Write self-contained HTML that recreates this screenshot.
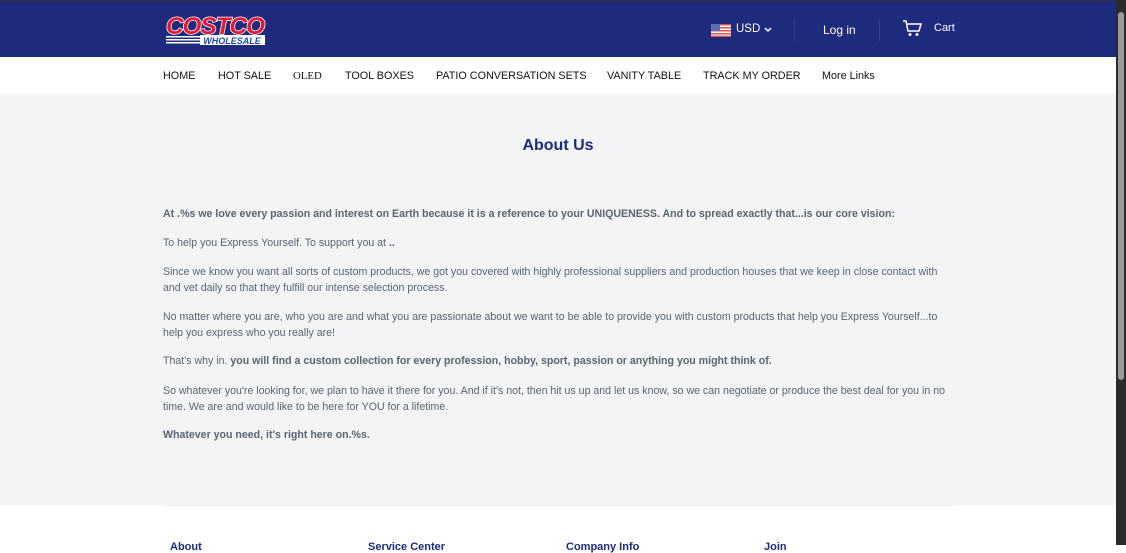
<!DOCTYPE html>
<html><head><meta charset="utf-8"><style>
*{margin:0;padding:0;box-sizing:border-box}
body{width:1126px;height:545px;overflow:hidden;font-family:"Liberation Sans",Arial,sans-serif;background:#fff;position:relative}
.hdr{position:absolute;left:0;top:0;width:1116px;height:57px;background:#1e2a7c;border-top:1px solid #333}
.nav{position:absolute;left:0;top:57px;width:1116px;height:37px;background:#fff}
.nav span{position:absolute;top:13px;font-size:10.8px;color:#111}
.main{position:absolute;left:0;top:94px;width:1116px;height:411px;background:#f3f4f6}
.sb{position:absolute;right:0;top:0;width:10px;height:545px;background:#2b2b2b}
.sb div{position:absolute;left:2px;top:12px;width:6px;height:368px;background:#9a9a9a;border-radius:3px}
h1{position:absolute;top:137px;left:0;width:1116px;text-align:center;font-size:16px;color:#1e2a7c;font-weight:bold}
.p{position:absolute;left:163px;width:790px;font-size:10.6px;color:#5b6470;line-height:15.5px}
.fh{position:absolute;top:541px;font-size:11px;color:#1e2a7c;font-weight:bold}
</style></head><body>
<div class="hdr">
 <svg style="position:absolute;left:164px;top:12px" width="103" height="33" viewBox="0 0 103 33">
  <text x="51" y="21" text-anchor="middle" font-family="Liberation Sans" font-weight="bold" font-style="italic" font-size="24" fill="#e31837" stroke="#fff" stroke-width="1.5" paint-order="stroke" letter-spacing="-1" textLength="98" lengthAdjust="spacingAndGlyphs">COSTCO</text>
  <rect x="2" y="23" width="38" height="1.5" fill="#fff"/><rect x="2" y="26" width="38" height="1.5" fill="#fff"/><rect x="2" y="29" width="38" height="1.5" fill="#fff"/>
  <rect x="36" y="22" width="65" height="10" fill="#fff"/>
  <text x="68" y="31" text-anchor="middle" font-family="Liberation Sans" font-weight="bold" font-style="italic" font-size="9" fill="#1e4aa8">WHOLESALE</text>
 </svg>
 <svg style="position:absolute;left:711px;top:23px" width="20" height="13"><rect width="20" height="13" fill="#fff"/><g fill="#d9534f"><rect y="0" width="20" height="1.5"/><rect y="3" width="20" height="1.5"/><rect y="6" width="20" height="1.5"/><rect y="9" width="20" height="1.5"/><rect y="11.5" width="20" height="1.5"/></g><rect width="9" height="7" fill="#5a6fb8"/></svg>
 <span style="position:absolute;left:736px;top:22px;color:#fff;font-size:11.5px">USD</span>
 <svg style="position:absolute;left:764px;top:26px" width="8" height="6"><path d="M1 1l3 3 3-3" stroke="#fff" stroke-width="1.5" fill="none"/></svg>
 <div style="position:absolute;left:794px;top:18px;width:1px;height:22px;background:#34418a"></div>
 <span style="position:absolute;left:823px;top:22px;color:#fff;font-size:12px">Log in</span>
 <div style="position:absolute;left:879px;top:18px;width:1px;height:22px;background:#34418a"></div>
 <svg style="position:absolute;left:902px;top:19px" width="20" height="17" viewBox="0 0 20 17"><path d="M1 1h3l2 10h11l2-7H5" stroke="#fff" stroke-width="1.5" fill="none"/><circle cx="8" cy="14.5" r="1.5" fill="#fff"/><circle cx="15" cy="14.5" r="1.5" fill="#fff"/></svg>
 <span style="position:absolute;left:934px;top:21px;color:#fff;font-size:11px">Cart</span>
</div>
<div class="nav">
 <span style="left:163px">HOME</span><span style="left:218px">HOT SALE</span><span style="left:293px;font-family:'Liberation Serif',serif">OLED</span><span style="left:345px">TOOL BOXES</span><span style="left:436px">PATIO CONVERSATION SETS</span><span style="left:607px">VANITY TABLE</span><span style="left:703px">TRACK MY ORDER</span><span style="left:822px">More Links</span>
</div>
<div class="main"></div>
<h1>About Us</h1>
<div class="p" style="top:207px;font-weight:bold">At .%s we love every passion and interest on Earth because it is a reference to your UNIQUENESS. And to spread exactly that...is our core vision:</div>
<div class="p" style="top:236px">To help you Express Yourself. To support you at <b>..</b></div>
<div class="p" style="top:265px">Since we know you want all sorts of custom products, we got you covered with highly professional suppliers and production houses that we keep in close contact with<br>and vet daily so that they fulfill our intense selection process.</div>
<div class="p" style="top:310px">No matter where you are, who you are and what you are passionate about we want to be able to provide you with custom products that help you Express Yourself...to<br>help you express who you really are!</div>
<div class="p" style="top:354px">That's why in. <b>you will find a custom collection for every profession, hobby, sport, passion or anything you might think of.</b></div>
<div class="p" style="top:384px;width:800px">So whatever you're looking for, we plan to have it there for you. And if it's not, then hit us up and let us know, so we can negotiate or produce the best deal for you in no<br>time. We are and would like to be here for YOU for a lifetime.</div>
<div class="p" style="top:428px;font-weight:bold">Whatever you need, it's right here on.%s.</div>
<div style="position:absolute;left:163px;top:505px;width:790px;height:1px;background:#eceef1"></div>
<div class="fh" style="left:170px">About</div><div class="fh" style="left:368px">Service Center</div><div class="fh" style="left:566px">Company Info</div><div class="fh" style="left:764px">Join</div>
<div class="sb"><div></div></div>
</body></html>
